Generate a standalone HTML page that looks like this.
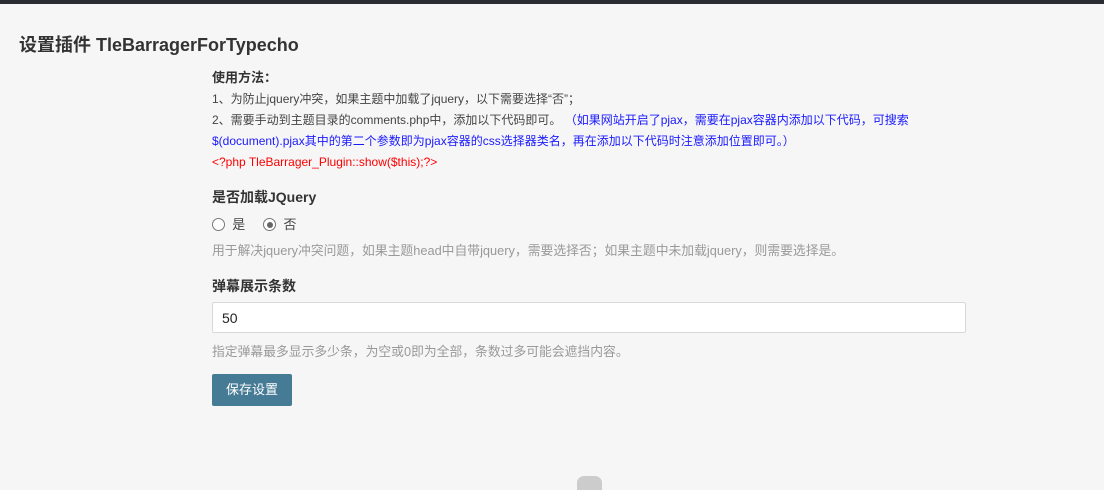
<!DOCTYPE html>
<html><head><meta charset="utf-8"><style>
body{margin:0;background:#f6f6f6;font-family:"Liberation Sans","Noto Sans CJK SC",sans-serif;color:#444;width:1104px;height:485px;overflow:hidden;position:relative}
.top{position:absolute;left:0;top:0;width:1104px;height:4px;background:#292d33}
.a{position:absolute;white-space:nowrap}
h1{position:absolute;left:19px;top:31px;margin:0;font-size:18px;font-weight:bold;color:#333}
.s{font-size:12px;line-height:21px}
.lab{font-size:14px;font-weight:bold;color:#333}
.d{font-size:12.8px;color:#999}
.r{display:inline-block;width:11px;height:11px;border:1px solid #777;border-radius:50%;background:#fff;vertical-align:-2px;position:relative}
.r.on::after{content:"";position:absolute;left:2.5px;top:2.5px;width:6px;height:6px;border-radius:50%;background:#666}
.inp{position:absolute;left:212px;top:302px;width:754px;height:31px;background:#fff;border:1px solid #d9d9d6;border-radius:2px;box-sizing:border-box;font-size:14px;color:#222;padding:7px 0 0 9px}
.btn{position:absolute;left:212px;top:374px;width:80px;height:32px;background:#467b96;color:#fff;border-radius:2px;font-size:13px;line-height:32px;text-align:center}
</style></head><body>
<div class="top"></div>
<h1>设置插件 TleBarragerForTypecho</h1>
<div class="a lab" style="left:212px;top:67px;font-size:13px">使用方法：</div>
<div class="a s" style="left:212px;top:89px">1、为防止jquery冲突，如果主题中加载了jquery，以下需要选择“否”；</div>
<div class="a s" style="left:212px;top:110px">2、需要手动到主题目录的comments.php中，添加以下代码即可。 <span style="color:#1a1aff">（如果网站开启了pjax，需要在pjax容器内添加以下代码，可搜索</span></div>
<div class="a s" style="left:212px;top:131px;color:#1a1aff">$(document).pjax其中的第二个参数即为pjax容器的css选择器类名，再在添加以下代码时注意添加位置即可。）</div>
<div class="a s" style="left:212px;top:152px;color:#f00">&lt;?php TleBarrager_Plugin::show($this);?&gt;</div>
<div class="a lab" style="left:212px;top:187px">是否加载JQuery</div>
<div class="a" style="left:212px;top:214px;font-size:13px"><span class="r"></span>&nbsp; 是 &nbsp;&nbsp;&nbsp; <span class="r on"></span>&nbsp; 否</div>
<div class="a d" style="left:212px;top:240px">用于解决jquery冲突问题，如果主题head中自带jquery，需要选择否；如果主题中未加载jquery，则需要选择是。</div>
<div class="a lab" style="left:212px;top:276px">弹幕展示条数</div>
<div class="inp">50</div>
<div class="a d" style="left:212px;top:341px">指定弹幕最多显示多少条，为空或0即为全部，条数过多可能会遮挡内容。</div>
<div class="btn">保存设置</div>
<div class="a" style="left:577px;top:476px;width:25px;height:14px;border-radius:7px 7px 0 0;background:#ccc"></div>
</body></html>
